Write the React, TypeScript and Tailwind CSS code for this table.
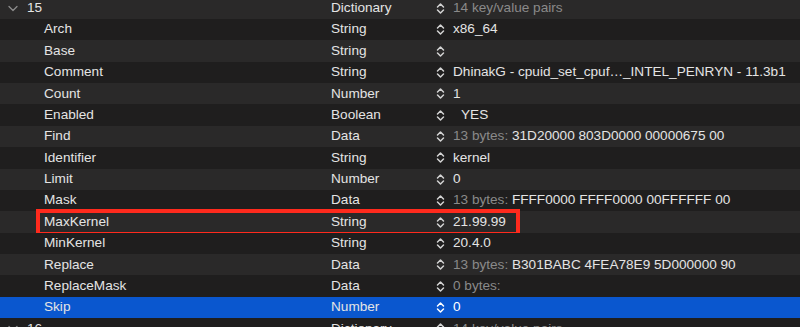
import React from "react";

type Row = {
  key: string;
  type: string;
  gray?: string;
  value?: string;
  top?: boolean;
  selected?: boolean;
  boxed?: boolean;
  valueIndent?: boolean;
};

const rows: Row[] = [
  { key: "15", type: "Dictionary", gray: "14 key/value pairs", top: true },
  { key: "Arch", type: "String", value: "x86_64" },
  { key: "Base", type: "String", value: "" },
  { key: "Comment", type: "String", value: "DhinakG - cpuid_set_cpuf…_INTEL_PENRYN - 11.3b1" },
  { key: "Count", type: "Number", value: "1" },
  { key: "Enabled", type: "Boolean", value: "YES", valueIndent: true },
  { key: "Find", type: "Data", gray: "13 bytes: ", value: "31D20000 803D0000 00000675 00" },
  { key: "Identifier", type: "String", value: "kernel" },
  { key: "Limit", type: "Number", value: "0" },
  { key: "Mask", type: "Data", gray: "13 bytes: ", value: "FFFF0000 FFFF0000 00FFFFFF 00" },
  { key: "MaxKernel", type: "String", value: "21.99.99", boxed: true },
  { key: "MinKernel", type: "String", value: "20.4.0" },
  { key: "Replace", type: "Data", gray: "13 bytes: ", value: "B301BABC 4FEA78E9 5D000000 90" },
  { key: "ReplaceMask", type: "Data", gray: "0 bytes:" },
  { key: "Skip", type: "Number", value: "0", selected: true },
  { key: "16", type: "Dictionary", gray: "14 key/value pairs", top: true },
];

function UpDown() {
  return (
    <svg width="9" height="13" viewBox="0 0 9 13" className="shrink-0">
      <path d="M1.5 5 L4.5 2 L7.5 5" fill="none" stroke="currentColor" strokeWidth="1.5" strokeLinecap="round" strokeLinejoin="round" />
      <path d="M1.5 8 L4.5 11 L7.5 8" fill="none" stroke="currentColor" strokeWidth="1.5" strokeLinecap="round" strokeLinejoin="round" />
    </svg>
  );
}

function Chevron() {
  return (
    <svg width="10" height="7" viewBox="0 0 10 7">
      <path d="M1 1.5 L5 5.5 L9 1.5" fill="none" stroke="#8c8c8c" strokeWidth="1.3" strokeLinecap="round" strokeLinejoin="round" />
    </svg>
  );
}

export default function App() {
  return (
    <div
      className="w-[800px] h-[327px] overflow-hidden bg-[#1e1e1e] text-[13.6px] text-[#e4e4e4]"
      style={{ fontFamily: '"Liberation Sans", Arial, Helvetica, sans-serif' }}
    >
      <div className="mt-[-2.4px] flex flex-col">
        {rows.map((r, i) => {
          const bg = r.selected
            ? "bg-[#0a57cf]"
            : i % 2 === 0
            ? "bg-[#2a2929]"
            : "bg-[#1f1e1e]";
          return (
            <div key={i} className={`relative flex h-[21.38px] items-center ${bg}`}>
              <div className="flex w-[331px] shrink-0 items-center">
                {r.top ? (
                  <>
                    <div className="ml-[8px] flex w-[19px] items-center">
                      <Chevron />
                    </div>
                    <span>{r.key}</span>
                  </>
                ) : (
                  <span className="ml-[44px]">{r.key}</span>
                )}
              </div>
              <div className="w-[105px] shrink-0">{r.type}</div>
              <div className={`flex items-center gap-[8px] ${r.selected ? "text-white" : "text-[#d4d4d4]"}`}>
                <UpDown />
                <span className={`whitespace-pre ${r.valueIndent ? "ml-[8px]" : ""}`}>
                  {r.gray && <span className="text-[#8a8a8a]">{r.gray}</span>}
                  {r.value && <span className={r.selected ? "text-white" : "text-[#e4e4e4]"}>{r.value}</span>}
                </span>
              </div>
              {r.boxed && (
                <div className="pointer-events-none absolute left-[36px] top-[-2.4px] bottom-[-3px] w-[484px] border-[4px] border-[#ff2a1d]" />
              )}
            </div>
          );
        })}
      </div>
    </div>
  );
}
